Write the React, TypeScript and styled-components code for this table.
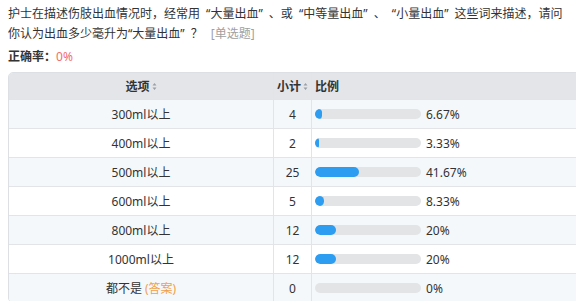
import { createGlobalStyle, styled } from "styled-components";

interface IRow {
  label: string;
  count: number;
  percent: number;
  answer?: boolean;
}

const rows: IRow[] = [
  { label: "300ml以上", count: 4, percent: 6.67 },
  { label: "400ml以上", count: 2, percent: 3.33 },
  { label: "500ml以上", count: 25, percent: 41.67 },
  { label: "600ml以上", count: 5, percent: 8.33 },
  { label: "800ml以上", count: 12, percent: 20 },
  { label: "1000ml以上", count: 12, percent: 20 },
  { label: "都不是", count: 0, percent: 0, answer: true },
];

const GlobalStyle = createGlobalStyle`
  body {
    margin: 0;
    background: #fff;
    overflow: hidden;
    font-family: "Noto Sans", "Noto Sans CJK SC", sans-serif;
    color: #333;
  }
`;

const Page = styled.div`
  padding: 4px 0 0 8px;
  width: 620px;
`;

const Question = styled.div`
  font-size: 12px;
  line-height: 20px;
  white-space: nowrap;
`;

const Line = styled.div<{ $spacing?: number }>`
  word-spacing: ${(p) => p.$spacing ?? 0}px;
`;

const QuestionType = styled.span`
  color: #a0a0a0;
  margin-left: 8px;
  word-spacing: 0;
`;

const Rate = styled.div`
  margin-top: 3px;
  font-size: 12px;
  font-weight: bold;
  line-height: 20px;
`;

const RateValue = styled.span`
  color: #f46c6c;
  font-weight: normal;
`;

const Table = styled.div`
  margin-top: 5px;
  border: 1px solid #dcdfe3;
  border-radius: 5px;
  overflow: hidden;
  font-size: 12px;
`;

const Row = styled.div<{ $head?: boolean; $odd?: boolean }>`
  display: grid;
  grid-template-columns: 265px 38px 1fr;
  height: ${(p) => (p.$head ? "26px" : "28px")};
  background: ${(p) => (p.$head ? "#e3e5e9" : p.$odd ? "#f5f8fb" : "#fff")};
  border-top: ${(p) => (p.$head ? "none" : "1px solid #e2e4e7")};
  font-weight: ${(p) => (p.$head ? "bold" : "normal")};
`;

const Cell = styled.div<{ $align?: string }>`
  display: flex;
  align-items: center;
  justify-content: ${(p) => p.$align || "flex-start"};
  border-right: 1px solid #e2e4e7;
  padding: 0 3px;
  white-space: nowrap;

  &:last-child {
    border-right: none;
  }
`;

const Answer = styled.span`
  color: #f0a04b;
  margin-left: 3px;
`;

const SortIcon = styled.svg`
  margin-left: 2px;
  flex: none;
`;

const Track = styled.div`
  width: 106px;
  height: 10px;
  border-radius: 5px;
  background: #e3e4e6;
  overflow: hidden;
  flex: none;
`;

const Fill = styled.div`
  height: 100%;
  background: #2d9df2;
  border-radius: 5px;
`;

const Percent = styled.span`
  margin-left: 5px;
`;

function Sort() {
  return (
    <SortIcon width="5" height="9" viewBox="0 0 5 9">
      <path d="M2.5 1 L4.5 3.6 H0.5 Z M2.5 8 L4.5 5.4 H0.5 Z" fill="#9aa0a6" />
    </SortIcon>
  );
}

export default function App() {
  return (
    <Page>
      <GlobalStyle />
      <Question>
        <Line $spacing={3}>
          护士在描述伤肢出血情况时，经常用 “大量出血” 、或 “中等量出血” 、 “小量出血” 这些词来描述，请问
        </Line>
        <Line $spacing={3}>
          你认为出血多少毫升为“大量出血” ？<QuestionType>[单选题]</QuestionType>
        </Line>
      </Question>
      <Rate>
        正确率：<RateValue>0%</RateValue>
      </Rate>
      <Table>
        <Row $head>
          <Cell $align="center">
            选项
            <Sort />
          </Cell>
          <Cell>
            小计
            <Sort />
          </Cell>
          <Cell>比例</Cell>
        </Row>
        {rows.map((r, i) => (
          <Row key={r.label} $odd={i % 2 === 0}>
            <Cell $align="center">
              {r.label}
              {r.answer && <Answer>(答案)</Answer>}
            </Cell>
            <Cell $align="center">{r.count}</Cell>
            <Cell>
              <Track>
                <Fill style={{ width: `${r.percent}%` }} />
              </Track>
              <Percent>{r.percent}%</Percent>
            </Cell>
          </Row>
        ))}
      </Table>
    </Page>
  );
}
